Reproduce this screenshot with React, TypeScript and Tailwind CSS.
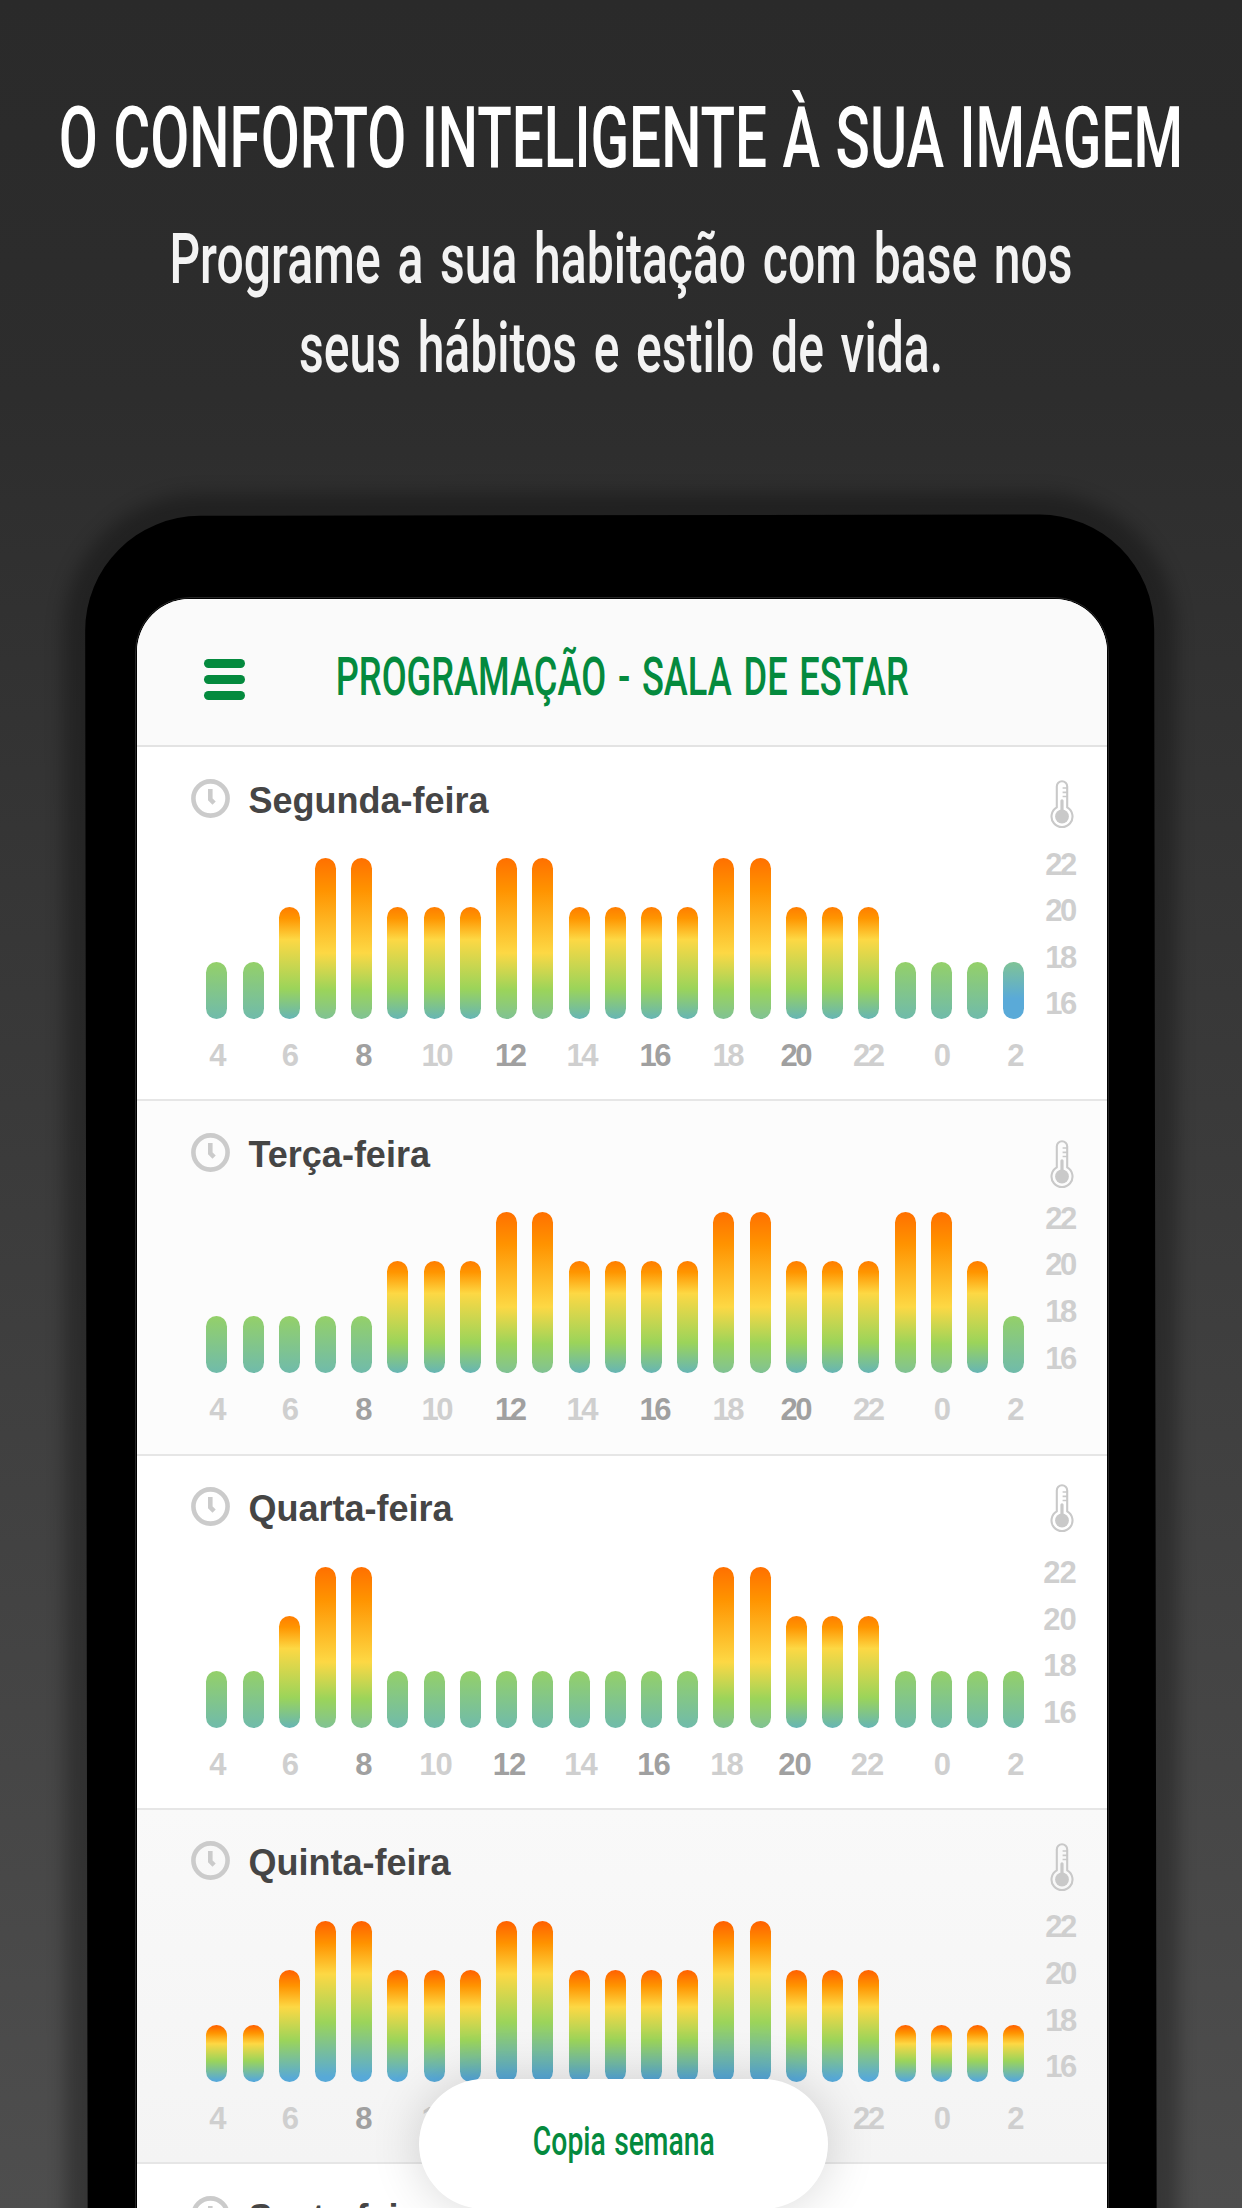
import { useState } from "react";
import { clsx } from "clsx";

type Tone = "day" | "vivid";

interface DaySchedule {
  name: string;
  temps: number[];
  tone: Tone;
  rowClass: string;
  thermoClass: string;
  coldLast?: boolean;
  wideDigits?: boolean;
}

const DAYS: DaySchedule[] = [
  {
    name: "Segunda-feira",
    temps: [18, 18, 20, 22, 22, 20, 20, 20, 22, 22, 20, 20, 20, 20, 22, 22, 20, 20, 20, 18, 18, 18, 18],
    tone: "day",
    rowClass: "bg-white",
    thermoClass: "mt-[33px]",
    coldLast: true,
  },
  {
    name: "Terça-feira",
    temps: [18, 18, 18, 18, 18, 20, 20, 20, 22, 22, 20, 20, 20, 20, 22, 22, 20, 20, 20, 22, 22, 20, 18],
    tone: "day",
    rowClass: "bg-[#fcfcfc]",
    thermoClass: "mt-[38.5px]",
  },
  {
    name: "Quarta-feira",
    temps: [18, 18, 20, 22, 22, 18, 18, 18, 18, 18, 18, 18, 18, 18, 22, 22, 20, 20, 20, 18, 18, 18, 18],
    tone: "day",
    rowClass: "bg-white",
    thermoClass: "mt-[28.5px]",
    wideDigits: true,
  },
  {
    name: "Quinta-feira",
    temps: [18, 18, 20, 22, 22, 20, 20, 20, 22, 22, 20, 20, 20, 20, 22, 22, 20, 20, 20, 18, 18, 18, 18],
    tone: "vivid",
    rowClass: "bg-linear-to-b from-[#f9f9f9] to-[#f4f4f4]",
    thermoClass: "mt-[33.5px]",
  },
  {
    name: "Sexta-feira",
    temps: [],
    tone: "day",
    rowClass: "bg-white",
    thermoClass: "mt-[33px]",
  },
];

// center of each label, measured from the left edge of the plot
const HOURS = [
  { label: "4", x: 11.5 },
  { label: "6", x: 84 },
  { label: "8", x: 157.5, strong: true },
  { label: "10", x: 231 },
  { label: "12", x: 304.5, strong: true },
  { label: "14", x: 376 },
  { label: "16", x: 449, strong: true },
  { label: "18", x: 522 },
  { label: "20", x: 590, strong: true },
  { label: "22", x: 662.5 },
  { label: "0", x: 736 },
  { label: "2", x: 809.5 },
];

const LABEL_WIDTH = 40;

const BAR_HEIGHT: Record<number, string> = {
  22: "h-[161px]",
  20: "h-[112px]",
  18: "h-[57px]",
};

const BAR_FILL: Record<number, string> = {
  22: "bg-[linear-gradient(#ff7000,#ff9300_20%,#fdd844_59%,#9bd45a_82%,#80c294)]",
  20: "bg-[linear-gradient(#ff7d00,#ff9500_10%,#fdd844_29%,#9bd45a_73%,#66b5b5)]",
  18: "bg-[linear-gradient(#94d069,#70bbab)]",
};

const VIVID_FILL = "bg-[linear-gradient(#ff6000,#ff9300_14%,#fdd844_33%,#9bd45a_63%,#57a9d8_97%)]";
const COLD_FILL = "bg-[linear-gradient(#7fc396,#5aaad8_64%)]";

function ClockIcon() {
  return (
    <svg className="size-[39px] shrink-0" viewBox="0 0 39 39" fill="none" stroke="#cbcbcb" strokeWidth="4.6">
      <circle cx="19.5" cy="19.5" r="17.1" />
      <path d="M19.3 10v10.4l3.8 3.8" />
    </svg>
  );
}

function ThermometerIcon({ className }: { className?: string }) {
  return (
    <svg className={clsx("h-[49px] w-6", className)} viewBox="0 0 24 49" fill="none" stroke="#c9c9c9">
      <path
        d="M6.8 27.4V6.4a5.2 5.2 0 0 1 10.4 0v21a10.5 10.5 0 1 1-10.4 0Z"
        strokeWidth="2.1"
        strokeLinejoin="round"
      />
      <path d="M12.6 8h4.6M12.6 12.3h4.6M12.6 16.5h4.6" strokeWidth="1.7" />
      <path d="M12 20.8V32" strokeWidth="3.2" strokeLinecap="round" />
      <circle cx="12" cy="36.5" r="6.9" fill="#c9c9c9" stroke="none" />
    </svg>
  );
}

function Bars({ day }: { day: DaySchedule }) {
  return (
    <div className="flex h-[161px] items-end justify-between">
      {day.temps.map((temp, i) => {
        const isCold = day.coldLast && i === day.temps.length - 1;
        return (
          <div
            key={i}
            className={clsx(
              "w-[21px] rounded-full",
              BAR_HEIGHT[temp],
              isCold ? COLD_FILL : day.tone === "vivid" ? VIVID_FILL : BAR_FILL[temp],
            )}
          />
        );
      })}
    </div>
  );
}

function HourAxis({ wide }: { wide?: boolean }) {
  return (
    <div
      className={clsx(
        "mt-[21px] flex h-[32px] text-[31px] leading-[32px] font-bold",
        wide ? "tracking-[-1px]" : "tracking-[-2.5px]",
      )}
    >
      {HOURS.map((hour, i) => {
        const prevEnd = i === 0 ? 0 : HOURS[i - 1].x + LABEL_WIDTH / 2;
        return (
          <span
            key={hour.label}
            className={clsx(
              "w-10 shrink-0 text-center",
              !wide && "pr-[2.5px]",
              wide && (hour.label.length === 2 ? "pr-[4px]" : "pr-px"),
              hour.strong ? "text-[#a0a0a0]" : "text-[#cfcfcf]",
            )}
            style={{ marginLeft: hour.x - LABEL_WIDTH / 2 - prevEnd }}
          >
            {hour.label}
          </span>
        );
      })}
    </div>
  );
}

function DayRow({ day }: { day: DaySchedule }) {
  const hasPlan = day.temps.length > 0;

  return (
    <section
      className={clsx("flex h-[354.33px] shrink-0 border-b-2 border-[#e6e6e6] pl-[54px]", day.rowClass)}
    >
      <div className="w-[834px] shrink-0">
        <div className="flex h-[111px] items-start gap-[18.5px] pt-[31.5px]">
          <ClockIcon />
          <h2 className="pt-px text-[36px] leading-[42px] font-bold text-[#454545]">{day.name}</h2>
        </div>
        {hasPlan && (
          <div className="ml-[15.4px] w-[818px]">
            <Bars day={day} />
            <HourAxis wide={day.wideDigits} />
          </div>
        )}
      </div>
      {hasPlan && (
        <div className="ml-[17px] flex w-10 flex-col items-center">
          <div className="h-[94.5px]">
            <ThermometerIcon className={day.thermoClass} />
          </div>
          <ul
            className={clsx(
              "w-10 text-center text-[31px] leading-[46.6px] font-bold text-[#cfcfcf]",
              day.wideDigits ? "pr-[5px] tracking-[-1px]" : "pr-[4px] tracking-[-2.5px]",
            )}
          >
            {[22, 20, 18, 16].map((t) => (
              <li key={t}>{t}</li>
            ))}
          </ul>
        </div>
      )}
    </section>
  );
}

export default function App() {
  const [menuOpen, setMenuOpen] = useState(false);

  return (
    <main className="relative flex h-[2208px] w-[1242px] flex-col overflow-hidden bg-[linear-gradient(#2a2a2a,#2d2d2d_18%,#323232_30%,#4e4e4e)] font-['Liberation_Sans',Arial,sans-serif]">
      <div className="flex h-[515px] shrink-0 flex-col items-center pt-[88px] font-['Roboto',sans-serif] whitespace-nowrap">
        <h1 className="scale-x-[0.667] text-[85px] leading-[100px] font-medium text-white [word-spacing:2px]">
          O CONFORTO INTELIGENTE À SUA IMAGEM
        </h1>
        <p className="mt-[27px] scale-x-[0.677] text-center text-[71px] leading-[88.5px] font-medium text-[#f3f3f3] [word-spacing:7px]">
          Programe a sua habitação com base nos
          <br />
          seus hábitos e estilo de vida.
        </p>
      </div>

      <div className="relative ml-[86px] h-[1693px] w-[1068px] shrink-0 pt-[84px] pl-[51px]">
        <div className="absolute top-px right-0 -left-px h-[1900px] origin-top-left rotate-[-0.09deg] rounded-[115px] bg-black shadow-[0_0_18px_22px_rgba(0,0,0,0.3)]" />

        <div className="relative flex h-[1609px] w-[970px] flex-col overflow-hidden rounded-t-[53px] bg-white outline-1 outline-offset-1 outline-[#262626]">
          <header className="flex h-[148px] shrink-0 items-center border-b-2 border-[#e3e3e3] bg-[#fafafa] pl-[67px]">
            <button
              aria-label="Menu"
              onClick={() => setMenuOpen(!menuOpen)}
              className="mt-[14px] flex w-[41px] flex-col gap-[7px]"
            >
              <span className="h-[9px] rounded-full bg-[#048a3e]" />
              <span className="h-[9px] rounded-full bg-[#048a3e]" />
              <span className="h-[9px] rounded-full bg-[#048a3e]" />
            </button>
            <div className="ml-[90px] flex w-[574px] justify-center pt-[11px]">
              <h2 className="scale-x-[0.677] font-['Roboto',sans-serif] text-[53.5px] font-medium whitespace-nowrap text-[#048a3e] [word-spacing:4px]">
                PROGRAMAÇÃO - SALA DE ESTAR
              </h2>
            </div>
          </header>

          {DAYS.map((day) => (
            <DayRow key={day.name} day={day} />
          ))}
        </div>

        <button className="absolute top-[1564px] left-[333px] flex h-[130px] w-[409px] items-center justify-center rounded-full bg-white pb-[5px] shadow-[0_0_50px_rgba(0,0,0,0.16)]">
          <span className="scale-x-[0.69] font-['Roboto',sans-serif] text-[41px] font-medium whitespace-nowrap text-[#048a3e] [word-spacing:2px]">
            Copia semana
          </span>
        </button>
      </div>
    </main>
  );
}
